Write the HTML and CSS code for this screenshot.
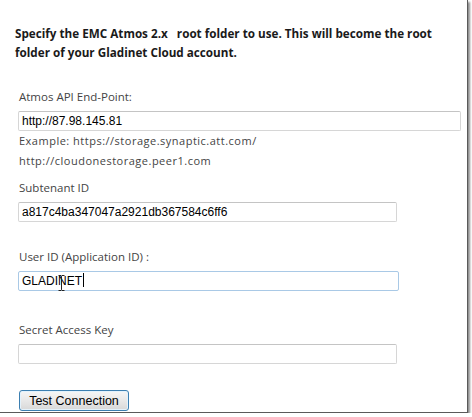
FILE: index.html
```html
<!DOCTYPE html>
<html lang="en">
<head>
    <meta charset="UTF-8" />
    <title>Gladinet Cloud - EMC Atmos</title>
    <link rel="stylesheet" href="styles.css">
</head>
<body>

<div class="frame">
    <!-- Intro -->
    <p class="intro">Specify the EMC Atmos 2.x &nbsp; root folder to use. This will become the root folder of your Gladinet Cloud account.</p>

    <!-- End-point -->
    <div class="field first">
        <div class="label">Atmos API End-Point:</div>
        <div class="textbox wide">http://87.98.145.81</div>
        <div class="hint">Example: https://storage.synaptic.att.com/<br>http://cloudonestorage.peer1.com</div>
    </div>

    <!-- Subtenant -->
    <div class="field">
        <div class="label">Subtenant ID</div>
        <div class="textbox">a817c4ba347047a2921db367584c6ff6</div>
    </div>

    <!-- User ID -->
    <div class="field gap">
        <div class="label">User ID (Application ID) :</div>
        <div class="textbox focused">GLADI<span class="ibeam-wrap">N<svg class="ibeam" width="7" height="16" viewBox="0 0 7 16"><path d="M0.5 0.5h2.5l0.5 1 0.5-1h2.5M3.5 1.5v13M0.5 15.5h2.5l0.5-1 0.5 1h2.5" fill="none" stroke="#222" stroke-width="1"/></svg></span>ET<span class="caret"></span></div>
    </div>

    <!-- Secret key -->
    <div class="field gap-lg">
        <div class="label">Secret Access Key</div>
        <div class="textbox"></div>
    </div>

    <button class="btn" type="button">Test Connection</button>
</div>

</body>
</html>
```

FILE: styles.css
```css
/* Base */
* {
    margin: 0;
    padding: 0;
    box-sizing: border-box;
}

body {
    background: #fff;
    font-family: 'Open Sans', 'Noto Sans', sans-serif;
    color: #444;
}

/* Screenshot frame with shadow */
.frame {
    width: 468px;
    height: 413px;
    background: #fff;
    border-right: 1px solid #5a5a5a;
    border-bottom: 1px solid #5a5a5a;
    box-shadow: 2px 2px 2px rgba(0,0,0,0.45);
    padding: 24px 0 0 15px;
}

.intro {
    font-size: 11.7px;
    font-weight: bold;
    line-height: 19px;
    color: #1a1a1a;
    width: 440px;
}

/* Fields */
.field {
    padding-left: 3px;
    margin-top: 8px;
}

.field.first {
    margin-top: 26px;
}

.field.gap {
    margin-top: 26px;
}

.field.gap-lg {
    margin-top: 30px;
}

.label {
    font-size: 11.5px;
    line-height: 18px;
    padding-left: 1px;
    color: #444;
}

.hint {
    font-size: 11px;
    letter-spacing: 0.5px;
    line-height: 20px;
    padding-left: 1px;
    color: #444;
}

.textbox {
    margin-top: 5px;
    width: 379px;
    height: 20px;
    border: 1px solid #d6d6d6;
    border-top-color: #c4c4c4;
    border-radius: 2px;
    font-family: 'Liberation Sans', Arial, sans-serif;
    font-size: 12px;
    line-height: 18px;
    color: #000;
    padding-left: 3px;
    white-space: nowrap;
}

.textbox.wide {
    width: 443px;
}

.textbox.focused {
    width: 381px;
    border-color: #a9c9e6;
}

.caret {
    display: inline-block;
    width: 1px;
    height: 14px;
    background: #000;
    vertical-align: -2px;
    margin-left: 1px;
}

.ibeam-wrap {
    position: relative;
}

.ibeam {
    position: absolute;
    left: 0;
    top: 1px;
}

/* Button */
.btn {
    display: block;
    margin: 26px 0 0 4px;
    width: 110px;
    height: 21px;
    border: 1px solid #3c7fb1;
    border-radius: 3px;
    background: linear-gradient(#f6f6f6, #e8e8e8 50%, #d8d8d8);
    box-shadow: inset 0 0 0 1px #e3f2fc;
    font-family: 'Liberation Sans', Arial, sans-serif;
    font-size: 12.5px;
    color: #000;
}
```
